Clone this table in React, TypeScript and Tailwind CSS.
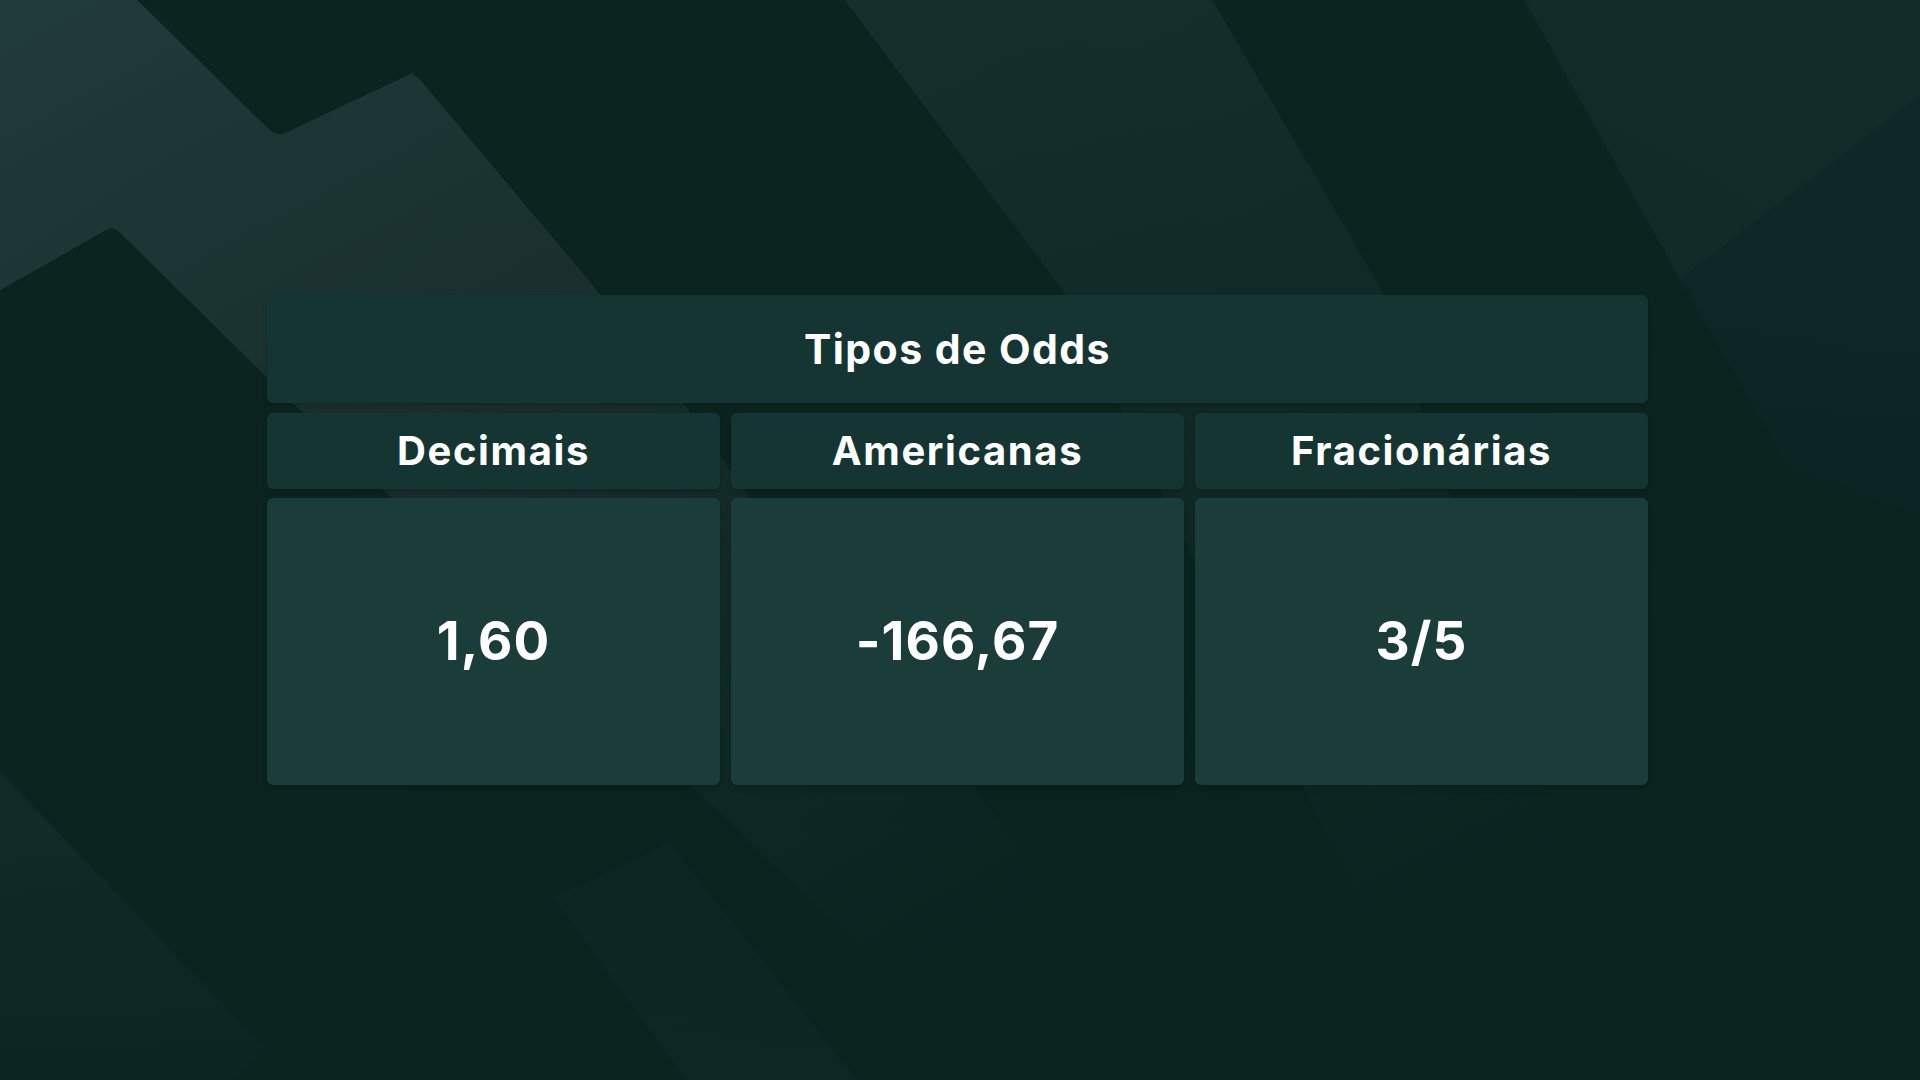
const odds = [
  { label: 'Decimais', value: '1,60' },
  { label: 'Americanas', value: '-166,67' },
  { label: 'Fracionárias', value: '3/5' },
];

function Backdrop() {
  return (
    <svg
      className="absolute inset-0 h-full w-full"
      viewBox="0 0 1568 882"
      preserveAspectRatio="none"
    >
      <defs>
        <linearGradient id="bandA" x1="0" y1="0" x2="0.6" y2="1">
          <stop offset="0" stopColor="#213a3a" />
          <stop offset="0.45" stopColor="#1b3230" />
          <stop offset="1" stopColor="#0b2420" />
        </linearGradient>
        <linearGradient id="bandB" x1="0" y1="0" x2="0.4" y2="1">
          <stop offset="0" stopColor="#17302e" />
          <stop offset="0.5" stopColor="#132b28" />
          <stop offset="1" stopColor="#0b2420" />
        </linearGradient>
        <linearGradient id="bandC" x1="0" y1="0" x2="0" y2="1">
          <stop offset="0" stopColor="#132c29" />
          <stop offset="1" stopColor="#0c2522" />
        </linearGradient>
        <linearGradient id="bandD" x1="0" y1="0" x2="0" y2="1">
          <stop offset="0" stopColor="#10282a" />
          <stop offset="1" stopColor="#0c2423" />
        </linearGradient>
        <radialGradient id="shade" cx="0.5" cy="0.55" r="0.7">
          <stop offset="0" stopColor="#0a211e" stopOpacity="0.35" />
          <stop offset="1" stopColor="#0a211e" stopOpacity="0" />
        </radialGradient>
      </defs>
      <rect width="1568" height="882" fill="#0b2420" />
      {/* top-left zigzag band */}
      <polygon
        points="0,0 112,0 222,108 230,110 336,60 342,64 490,240 561,333 607,400 980,882 815,882 239,329 96,188 90,186 0,237"
        fill="url(#bandA)"
      />
      {/* top centre band */}
      <polygon points="690,0 990,0 1130,240 1260,640 1349,882 1180,882 870,240" fill="url(#bandB)" />
      {/* top right */}
      <polygon points="1245,0 1568,0 1568,78 1372,228" fill="#132c29" />
      <polygon points="1372,228 1568,78 1568,420 1460,380" fill="url(#bandD)" />
      {/* bottom left */}
      <polygon points="0,630 215,855 190,882 0,882" fill="url(#bandC)" />
      {/* bottom centre */}
      <polygon points="452,733 547,688 700,882 560,882" fill="#0e2724" />
      <rect width="1568" height="882" fill="url(#shade)" />
    </svg>
  );
}

export default function App() {
  return (
    <div
      className="relative flex h-screen w-full items-center justify-center overflow-hidden bg-[#0b2420] pr-[5px] text-white"
      style={{ fontFamily: 'Inter, "Noto Sans", sans-serif' }}
    >
      <Backdrop />

      <div className="relative w-[1381px]">
        <div className="flex h-[108px] items-center justify-center rounded-md bg-[#153532] shadow-md">
          <h1 className="text-[41px] font-bold leading-none tracking-[0.035em]">Tipos de Odds</h1>
        </div>

        <div className="mt-[10px] grid grid-cols-3 gap-[11px]">
          {odds.map((o) => (
            <div
              key={o.label}
              className="flex h-[76px] items-center justify-center rounded-md bg-[#153532] shadow-md"
            >
              <span className="text-[40px] font-bold leading-none tracking-[0.04em]">{o.label}</span>
            </div>
          ))}
        </div>

        <div className="mt-[9px] grid grid-cols-3 gap-[11px]">
          {odds.map((o) => (
            <div
              key={o.label}
              className="flex h-[287px] items-center justify-center rounded-md bg-[#1b3d3a] shadow-md"
            >
              <span className="text-[53px] font-bold leading-none tracking-[0.02em]">{o.value}</span>
            </div>
          ))}
        </div>
      </div>
    </div>
  );
}
